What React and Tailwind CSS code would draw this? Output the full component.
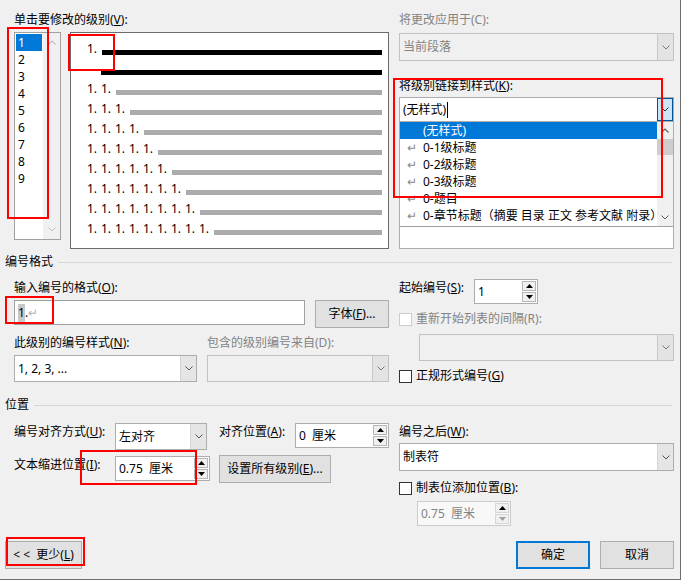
import { clsx as cn } from 'clsx';

// Windows-style "define multilevel list" dialog, expanded (更少) view.

const Chevron = ({ className = '' }) => (
  <svg width="8" height="5" viewBox="0 0 8 5" className={className}>
    <path d="M0.5 0.5 L4 4 L7.5 0.5" fill="none" stroke="currentColor" strokeWidth="1" />
  </svg>
);

const ChevronUp = ({ className = '' }) => (
  <svg width="8" height="5" viewBox="0 0 8 5" className={className}>
    <path d="M0.5 4.5 L4 1 L7.5 4.5" fill="none" stroke="currentColor" strokeWidth="1.2" />
  </svg>
);

const TriUp = () => (
  <svg width="7" height="4" viewBox="0 0 7 4">
    <path d="M0 4 L3.5 0 L7 4 Z" fill="currentColor" />
  </svg>
);

const TriDown = () => (
  <svg width="7" height="4" viewBox="0 0 7 4">
    <path d="M0 0 L3.5 4 L7 0 Z" fill="currentColor" />
  </svg>
);

function DropBtn({ focused, disabled }) {
  return (
    <div
      className={cn(
        'w-[16px] self-stretch flex items-center justify-center',
        focused && 'bg-[#cce4f7] border border-[#005499] text-[#333]',
        !focused && disabled && 'bg-[#e3e3e3] border-l border-[#c8c8c8] text-[#777]',
        !focused && !disabled && 'bg-[#e5e5e5] border-l border-[#d4d4d4] text-[#555]'
      )}
    >
      <Chevron />
    </div>
  );
}

function Combo({ size, text, disabled, focused, children }) {
  return (
    <div
      className={cn(
        'flex border',
        disabled ? 'bg-[#f0f0f0] border-[#c2c2c2] text-[#838383]' : 'bg-white border-[#adadad] text-black',
        size
      )}
    >
      <div className="flex-1 flex items-center pl-[3px] whitespace-nowrap overflow-hidden">
        {text}
        {children}
      </div>
      <DropBtn focused={focused} disabled={disabled} />
    </div>
  );
}

function Spin({ size, text, disabled }) {
  return (
    <div className={cn('flex border h-[25px]', disabled ? 'border-[#cccccc] bg-[#f8f8f8] text-[#838383]' : 'border-[#adadad] bg-white', size)}>
      <div className="flex-1 flex items-center pl-[3px] whitespace-pre">{text}</div>
      <div className="w-[15px] flex flex-col gap-[1px] p-[1px] pl-0">
        <div className={cn('flex-1 flex items-center justify-center border', disabled ? 'border-[#d6d6d6] bg-[#f0f0f0] text-black' : 'border-[#b6b6b6] bg-[#f0f0f0] text-black')}>
          <TriUp />
        </div>
        <div className={cn('flex-1 flex items-center justify-center border', disabled ? 'border-[#d6d6d6] bg-[#f0f0f0] text-[#a0a0a0]' : 'border-[#b6b6b6] bg-[#f0f0f0] text-black')}>
          <TriDown />
        </div>
      </div>
    </div>
  );
}

function Button({ size, primary, children }) {
  return (
    <div
      className={cn(
        'flex items-center justify-center bg-[#e1e1e1] whitespace-pre',
        primary ? 'border-2 border-[#0078d7]' : 'border border-[#adadad]',
        size
      )}
    >
      {children}
    </div>
  );
}

function Check({ disabled, children }) {
  return (
    <div className={cn('h-[20px] flex items-center', disabled && 'text-[#838383]')}>
      <div className={cn('w-[13px] h-[13px] border bg-white', disabled ? 'border-[#cccccc]' : 'border-[#333333]')} />
      <span className="ml-[4px] leading-[20px]">{children}</span>
    </div>
  );
}

function SectionHead({ children }) {
  return (
    <div className="h-[20px] flex items-center pl-[5px] pr-[8px]">
      <span className="leading-[20px]">{children}</span>
      <div className="flex-1 h-px bg-[#d6d6d6] ml-[5px]" />
    </div>
  );
}

function Mark({ className }) {
  return <div className={cn('absolute border-2 border-[#ff0000] pointer-events-none', className)} />;
}

const levels = [1, 2, 3, 4, 5, 6, 7, 8, 9];
const styles = ['(无样式)', '0-1级标题', '0-2级标题', '0-3级标题', '0-题目', '0-章节标题（摘要 目录 正文 参考文献 附录）'];

function Preview() {
  const rows = [2, 3, 4, 5, 6, 7, 8, 9];
  return (
    <div className="w-[319px] h-[217px] bg-white border border-[#6b6b6b] pt-[9px] pl-[16px] pr-[6px]">
      <div className="h-[20px] flex items-center">
        <span className="w-[15px] leading-[16px] mb-[7px] shrink-0">1.</span>
        <div className="flex-1 h-[5px] bg-black" />
      </div>
      <div className="h-[20px] flex items-center pl-[14px]">
        <div className="flex-1 h-[5px] bg-black" />
      </div>
      {rows.map((n) => (
        <div key={n} className="h-[20px] flex items-center">
          {Array.from({ length: n }).map((_, i) => (
            <span key={i} className="w-[14px] leading-[16px] mb-[7px] shrink-0">1.</span>
          ))}
          <div className="flex-1 h-[5px] bg-[#ababab] ml-[1px]" />
        </div>
      ))}
    </div>
  );
}

export default function App() {
  return (
    <div className="w-[683px] h-[584px] bg-white text-[12px] text-black font-['Noto_Sans','Noto_Sans_CJK_SC',sans-serif]">
      <div className="relative w-[681px] h-[580px] bg-[#f0f0f0] border-r border-b border-[#6e6e6e]">
        {/* Top: level picker, preview, apply-to / link-to-style */}
        <div className="flex pl-[14px] pt-[10px]">
          <div className="w-[375px]">
            <div className="h-[20px] leading-[20px]">
              单击要修改的级别(<u>V</u>):
            </div>
            <div className="mt-[2px] flex">
              <div className="w-[47px] h-[208px] border border-[#a0a0a0] bg-white flex">
                <div className="flex-1 pt-[1px]">
                  {levels.map((n) => (
                    <div
                      key={n}
                      className={cn('mx-[1px] h-[17px] leading-[17px] pl-[2px]', n === 1 ? 'bg-[#0078d7] text-white' : '')}
                    >
                      {n}
                    </div>
                  ))}
                </div>
                <div className="w-[17px] bg-[#f0f0f0] flex flex-col items-center justify-between py-[7px] text-[#c2c2c2]">
                  <ChevronUp />
                  <Chevron />
                </div>
              </div>
              <div className="ml-[9px]">
                <Preview />
              </div>
            </div>
          </div>

          <div className="ml-[10px] w-[275px]">
            <div className="h-[20px] leading-[20px] text-[#838383]">将更改应用于(C):</div>
            <div className="mt-[3px]">
              <Combo size="w-[275px] h-[28px]" text="当前段落" disabled />
            </div>
            <div className="mt-[15px] h-[20px] leading-[20px]">
              将级别链接到样式(<u>K</u>):
            </div>
            <div className="mt-[1px]">
              <Combo size="w-[275px] h-[25px]" text="(无样式)" focused>
                <span className="inline-block w-px h-[16px] bg-black ml-[1px]" />
              </Combo>
            </div>
            <div className="w-[275px] h-[127px] bg-white border border-t-0 border-[#adadad]">
              <div className="h-[105px] flex border-b border-[#a0a0a0]">
                <div className="flex-1 overflow-hidden">
                  {styles.map((s, i) => (
                    <div
                      key={s}
                      className={cn('h-[17px] leading-[17px] flex items-center pl-[7px] whitespace-nowrap', i === 0 ? 'bg-[#0078d7] text-white' : '')}
                    >
                      <span className={cn('w-[16px] shrink-0', i === 0 ? '' : 'text-[#8a8a8a]')}>{i === 0 ? '' : '↵'}</span>
                      <span>{s}</span>
                    </div>
                  ))}
                </div>
                <div className="w-[16px] bg-[#f0f0f0] flex flex-col items-center text-[#606060]">
                  <div className="h-[17px] flex items-center">
                    <ChevronUp />
                  </div>
                  <div className="w-full h-[16px] bg-[#cdcdcd]" />
                  <div className="flex-1" />
                  <div className="h-[17px] flex items-center">
                    <Chevron />
                  </div>
                </div>
              </div>
            </div>
          </div>
        </div>

        {/* 编号格式 */}
        <div className="mt-[3px]">
          <SectionHead>编号格式</SectionHead>
        </div>
        <div className="flex pl-[14px]">
          <div className="w-[375px]">
            <div className="mt-[6px] h-[20px] leading-[20px]">
              输入编号的格式(<u>O</u>):
            </div>
            <div className="mt-[2px] flex items-start">
              <div className="w-[291px] h-[25px] border border-[#a0a0a0] bg-white flex items-center pl-[3px]">
                <span className="bg-[#c8c8c8] leading-[18px]">1</span>
                <span>.</span>
                <span className="text-[#b4b4b4]">↵</span>
              </div>
              <Button size="ml-[10px] w-[74px] h-[28px]">
                字体(<u>F</u>)...
              </Button>
            </div>
            <div className="mt-[5px] flex">
              <div className="w-[183px]">
                <div className="h-[20px] leading-[20px]">
                  此级别的编号样式(<u>N</u>):
                </div>
                <div className="mt-[2px]">
                  <Combo size="w-[183px] h-[27px]" text="1, 2, 3, ..." />
                </div>
              </div>
              <div className="ml-[10px] w-[182px]">
                <div className="h-[20px] leading-[20px] text-[#838383] whitespace-nowrap">包含的级别编号来自(D):</div>
                <div className="mt-[2px]">
                  <Combo size="w-[182px] h-[27px]" text="" disabled />
                </div>
              </div>
            </div>
          </div>

          <div className="ml-[10px] w-[275px]">
            <div className="mt-[7px] flex items-start">
              <div className="w-[75px] leading-[18px]">
                起始编号(<u>S</u>):
              </div>
              <Spin size="w-[64px]" text="1" />
            </div>
            <div className="mt-[5px]">
              <Check disabled>重新开始列表的间隔(R):</Check>
            </div>
            <div className="mt-[5px] pl-[20px]">
              <Combo size="w-[255px] h-[27px]" text="" disabled />
            </div>
            <div className="mt-[5px]">
              <Check>
                正规形式编号(<u>G</u>)
              </Check>
            </div>
          </div>
        </div>

        {/* 位置 */}
        <div className="mt-[9px]">
          <SectionHead>位置</SectionHead>
        </div>
        <div className="flex pl-[14px]">
          <div className="w-[375px]">
            <div className="mt-[8px] flex items-start">
              <div className="w-[101px] leading-[18px] whitespace-nowrap">
                编号对齐方式(<u>U</u>):
              </div>
              <Combo size="w-[92px] h-[27px]" text="左对齐" />
              <div className="ml-[12px] w-[76px] leading-[18px] whitespace-nowrap">
                对齐位置(<u>A</u>):
              </div>
              <Spin size="w-[94px]" text="0  厘米" />
            </div>
            <div className="mt-[5px] flex items-start">
              <div className="mt-[1px] w-[101px] leading-[18px] whitespace-nowrap">
                文本缩进位置(<u>I</u>):
              </div>
              <div className="mt-[1px]">
                <Spin size="w-[95px]" text="0.75  厘米" />
              </div>
              <Button size="ml-[9px] w-[112px] h-[28px]">
                设置所有级别(<u>E</u>)...
              </Button>
            </div>
          </div>

          <div className="ml-[10px] w-[275px]">
            <div className="mt-[8px] leading-[18px]">
              编号之后(<u>W</u>):
            </div>
            <div className="mt-[2px]">
              <Combo size="w-[275px] h-[28px]" text="制表符" />
            </div>
            <div className="mt-[7px]">
              <Check>
                制表位添加位置(<u>B</u>):
              </Check>
            </div>
            <div className="mt-[3px] pl-[18px]">
              <Spin size="w-[94px]" text="0.75  厘米" disabled />
            </div>
          </div>
        </div>

        {/* Bottom buttons */}
        <div className="mt-[15px] flex pl-[5px] pr-[6px]">
          <Button size="w-[77px] h-[28px]">
            {'< <  '}更少(<u>L</u>)
          </Button>
          <div className="flex-1" />
          <Button size="w-[74px] h-[28px]" primary>
            确定
          </Button>
          <Button size="ml-[10px] w-[74px] h-[28px]">取消</Button>
        </div>

        {/* Red annotation boxes */}
        <Mark className="left-[7px] top-[27px] w-[42px] h-[192px]" />
        <Mark className="left-[68px] top-[34px] w-[47px] h-[37px]" />
        <Mark className="left-[393px] top-[78px] w-[270px] h-[120px]" />
        <Mark className="left-[5px] top-[296px] w-[49px] h-[28px]" />
        <Mark className="left-[80px] top-[450px] w-[117px] h-[35px]" />
        <Mark className="left-[6px] top-[537px] w-[79px] h-[29px]" />
      </div>
    </div>
  );
}
